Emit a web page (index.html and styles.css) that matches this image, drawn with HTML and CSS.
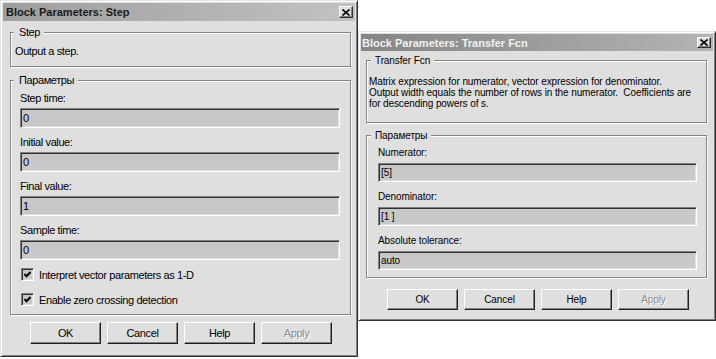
FILE: index.html
```html
<!DOCTYPE html>
<html lang="ru">
<head>
    <meta charset="UTF-8">
    <meta name="viewport" content="width=device-width, initial-scale=1.0">
    <title>Block Parameters</title>
    <link rel="stylesheet" href="styles.css">
</head>
<body>
    <div class="desk">
        <!-- Step block dialog -->
        <div class="window win-step">
            <div class="titlebar inactive">
                <span class="title">Block Parameters: Step</span>
                <span class="close">
                    <svg width="8" height="7" viewBox="0 0 8 7"><path d="M0.5 0.5L7.5 6.5M7.5 0.5L0.5 6.5" stroke="#000" stroke-width="1.6" fill="none"/></svg>
                </span>
            </div>
            <div class="body">
                <fieldset class="group">
                    <legend>Step</legend>
                    <div class="group-body desc">Output a step.</div>
                </fieldset>
                <fieldset class="group params">
                    <legend>Параметры</legend>
                    <div class="group-body">
                        <div class="row">
                            <div class="label">Step time:</div>
                            <div class="field">0</div>
                        </div>
                        <div class="row">
                            <div class="label">Initial value:</div>
                            <div class="field">0</div>
                        </div>
                        <div class="row">
                            <div class="label">Final value:</div>
                            <div class="field">1</div>
                        </div>
                        <div class="row">
                            <div class="label">Sample time:</div>
                            <div class="field">0</div>
                        </div>
                        <div class="check">
                            <span class="box"><svg width="7" height="7" viewBox="0 0 7 7"><path d="M0.5 3L2.5 5.2L6.5 1" stroke="#000" stroke-width="2" fill="none"/></svg></span>
                            Interpret vector parameters as 1-D
                        </div>
                        <div class="check">
                            <span class="box"><svg width="7" height="7" viewBox="0 0 7 7"><path d="M0.5 3L2.5 5.2L6.5 1" stroke="#000" stroke-width="2" fill="none"/></svg></span>
                            Enable zero crossing detection
                        </div>
                    </div>
                </fieldset>
                <div class="buttons">
                    <button>OK</button>
                    <button>Cancel</button>
                    <button>Help</button>
                    <button class="disabled">Apply</button>
                </div>
            </div>
        </div>

        <!-- Transfer Fcn block dialog -->
        <div class="window win-tf">
            <div class="titlebar active">
                <span class="title">Block Parameters: Transfer Fcn</span>
                <span class="close">
                    <svg width="8" height="7" viewBox="0 0 8 7"><path d="M0.5 0.5L7.5 6.5M7.5 0.5L0.5 6.5" stroke="#000" stroke-width="1.6" fill="none"/></svg>
                </span>
            </div>
            <div class="body">
                <fieldset class="group">
                    <legend>Transfer Fcn</legend>
                    <div class="group-body desc">
                        Matrix expression for numerator, vector expression for denominator.<br>
                        Output width equals the number of rows in the numerator.&nbsp; Coefficients are<br>
                        for descending powers of s.
                    </div>
                </fieldset>
                <fieldset class="group params">
                    <legend>Параметры</legend>
                    <div class="group-body">
                        <div class="row">
                            <div class="label">Numerator:</div>
                            <div class="field">[5]</div>
                        </div>
                        <div class="row">
                            <div class="label">Denominator:</div>
                            <div class="field">[1 ]</div>
                        </div>
                        <div class="row">
                            <div class="label">Absolute tolerance:</div>
                            <div class="field">auto</div>
                        </div>
                    </div>
                </fieldset>
                <div class="buttons">
                    <button>OK</button>
                    <button>Cancel</button>
                    <button>Help</button>
                    <button class="disabled">Apply</button>
                </div>
            </div>
        </div>
    </div>
</body>
</html>
```

FILE: styles.css
```css
body {
    margin: 0;
    background-color: #fff;
    font-family: "Liberation Sans", Arial, sans-serif;
    color: #000;
}

.desk {
    display: flex;
    align-items: flex-start;
}

.window {
    width: 358px;
    box-sizing: border-box;
    padding: 2px;
    background-color: #dfdfdf;
    border: 1px solid;
    border-color: #e4e4e4 #303030 #303030 #e4e4e4;
    box-shadow: inset 1px 1px 0 #fff, inset -1px -1px 0 #808080;
}

.win-step {
    font-size: 11px;
    letter-spacing: -0.4px;
}

.win-tf {
    margin-top: 31px;
    font-size: 10px;
    letter-spacing: -0.1px;
}

/* title bars */
.titlebar {
    display: flex;
    justify-content: space-between;
    align-items: center;
    font-size: 11px;
    font-weight: bold;
    letter-spacing: 0;
}

.win-step .titlebar {
    height: 18px;
    padding-left: 3px;
}

.win-tf .titlebar {
    height: 17px;
    padding-left: 1px;
}

.titlebar.inactive {
    background: linear-gradient(90deg, #9e9e9e, #c2c2c2);
    color: #1a1a1a;
}

.titlebar.active {
    background: linear-gradient(90deg, #858585, #b4b4b4);
    color: #f2f2f2;
}

.close {
    display: flex;
    align-items: center;
    justify-content: center;
    width: 14px;
    height: 12px;
    margin-right: 2px;
    box-sizing: border-box;
    background-color: #dfdfdf;
    border: 1px solid;
    border-color: #fff #303030 #303030 #fff;
    box-shadow: inset -1px -1px 0 #808080;
}

.win-tf .close {
    height: 11px;
}

/* dialog body */
.win-step .body {
    padding: 5px 4px 10px 7px;
}

.win-tf .body {
    padding: 4px 6px 8px 5px;
}

.group {
    margin: 0;
    padding: 0;
    min-width: 0;
    border: 1px solid #848484;
    box-shadow: 1px 1px 0 #fff, inset 1px 1px 0 #fff;
}

.group legend {
    margin-left: 3px;
    padding: 0 4px 0 5px;
    line-height: 13px;
    background-color: #dfdfdf;
}

.win-tf .group legend {
    margin-left: 4px;
    padding: 0 4px;
    line-height: 11px;
}

.params {
    margin-top: 7px;
}

.win-step .desc {
    padding: 6px 4px 8px 4px;
    line-height: 13px;
}

.win-tf .desc {
    padding: 10px 2px 13px 2px;
    line-height: 11px;
}

.win-step .params .group-body {
    padding: 5px 10px 8px 9px;
}

.win-tf .params .group-body {
    padding: 6px 9px 7px 11px;
}

/* labelled edit fields */
.win-step .row {
    margin-bottom: 8px;
}

.win-step .label {
    line-height: 13px;
    margin-bottom: 3px;
}

.win-tf .row {
    margin-bottom: 9px;
}

.win-tf .row:last-child {
    margin-bottom: 0;
}

.win-tf .label {
    line-height: 11px;
    margin-bottom: 5px;
}

.field {
    height: 20px;
    box-sizing: border-box;
    padding-left: 2px;
    line-height: 18px;
    background-color: #c8c8c8;
    border: 1px solid;
    border-color: #808080 #fff #fff #808080;
    box-shadow: inset 1px 1px 0 #303030, inset -1px -1px 0 #dfdfdf;
}

.win-tf .field {
    height: 19px;
    line-height: 17px;
}

/* check boxes */
.check {
    display: flex;
    align-items: center;
    gap: 5px;
    height: 13px;
}

.check + .check {
    margin-top: 12px;
}

.box {
    display: flex;
    align-items: center;
    justify-content: center;
    width: 13px;
    height: 13px;
    margin-left: 1px;
    box-sizing: border-box;
    background-color: #c8c8c8;
    border: 1px solid;
    border-color: #808080 #fff #fff #808080;
    box-shadow: inset 1px 1px 0 #303030, inset -1px -1px 0 #dfdfdf;
}

/* push buttons */
.buttons {
    display: flex;
    gap: 6px;
}

.win-step .buttons {
    margin-top: 7px;
    padding-left: 20px;
}

.win-tf .buttons {
    margin-top: 11px;
    padding-left: 21px;
}

button {
    width: 71px;
    height: 22px;
    padding: 0;
    font: inherit;
    letter-spacing: inherit;
    color: #000;
    background-color: #dfdfdf;
    border: 1px solid;
    border-color: #fff #202020 #202020 #fff;
    box-shadow: inset -1px -1px 0 #808080;
}

.win-tf button {
    height: 21px;
}

button.disabled {
    color: #8c8c8c;
    text-shadow: 1px 1px 0 #fff;
}
```
